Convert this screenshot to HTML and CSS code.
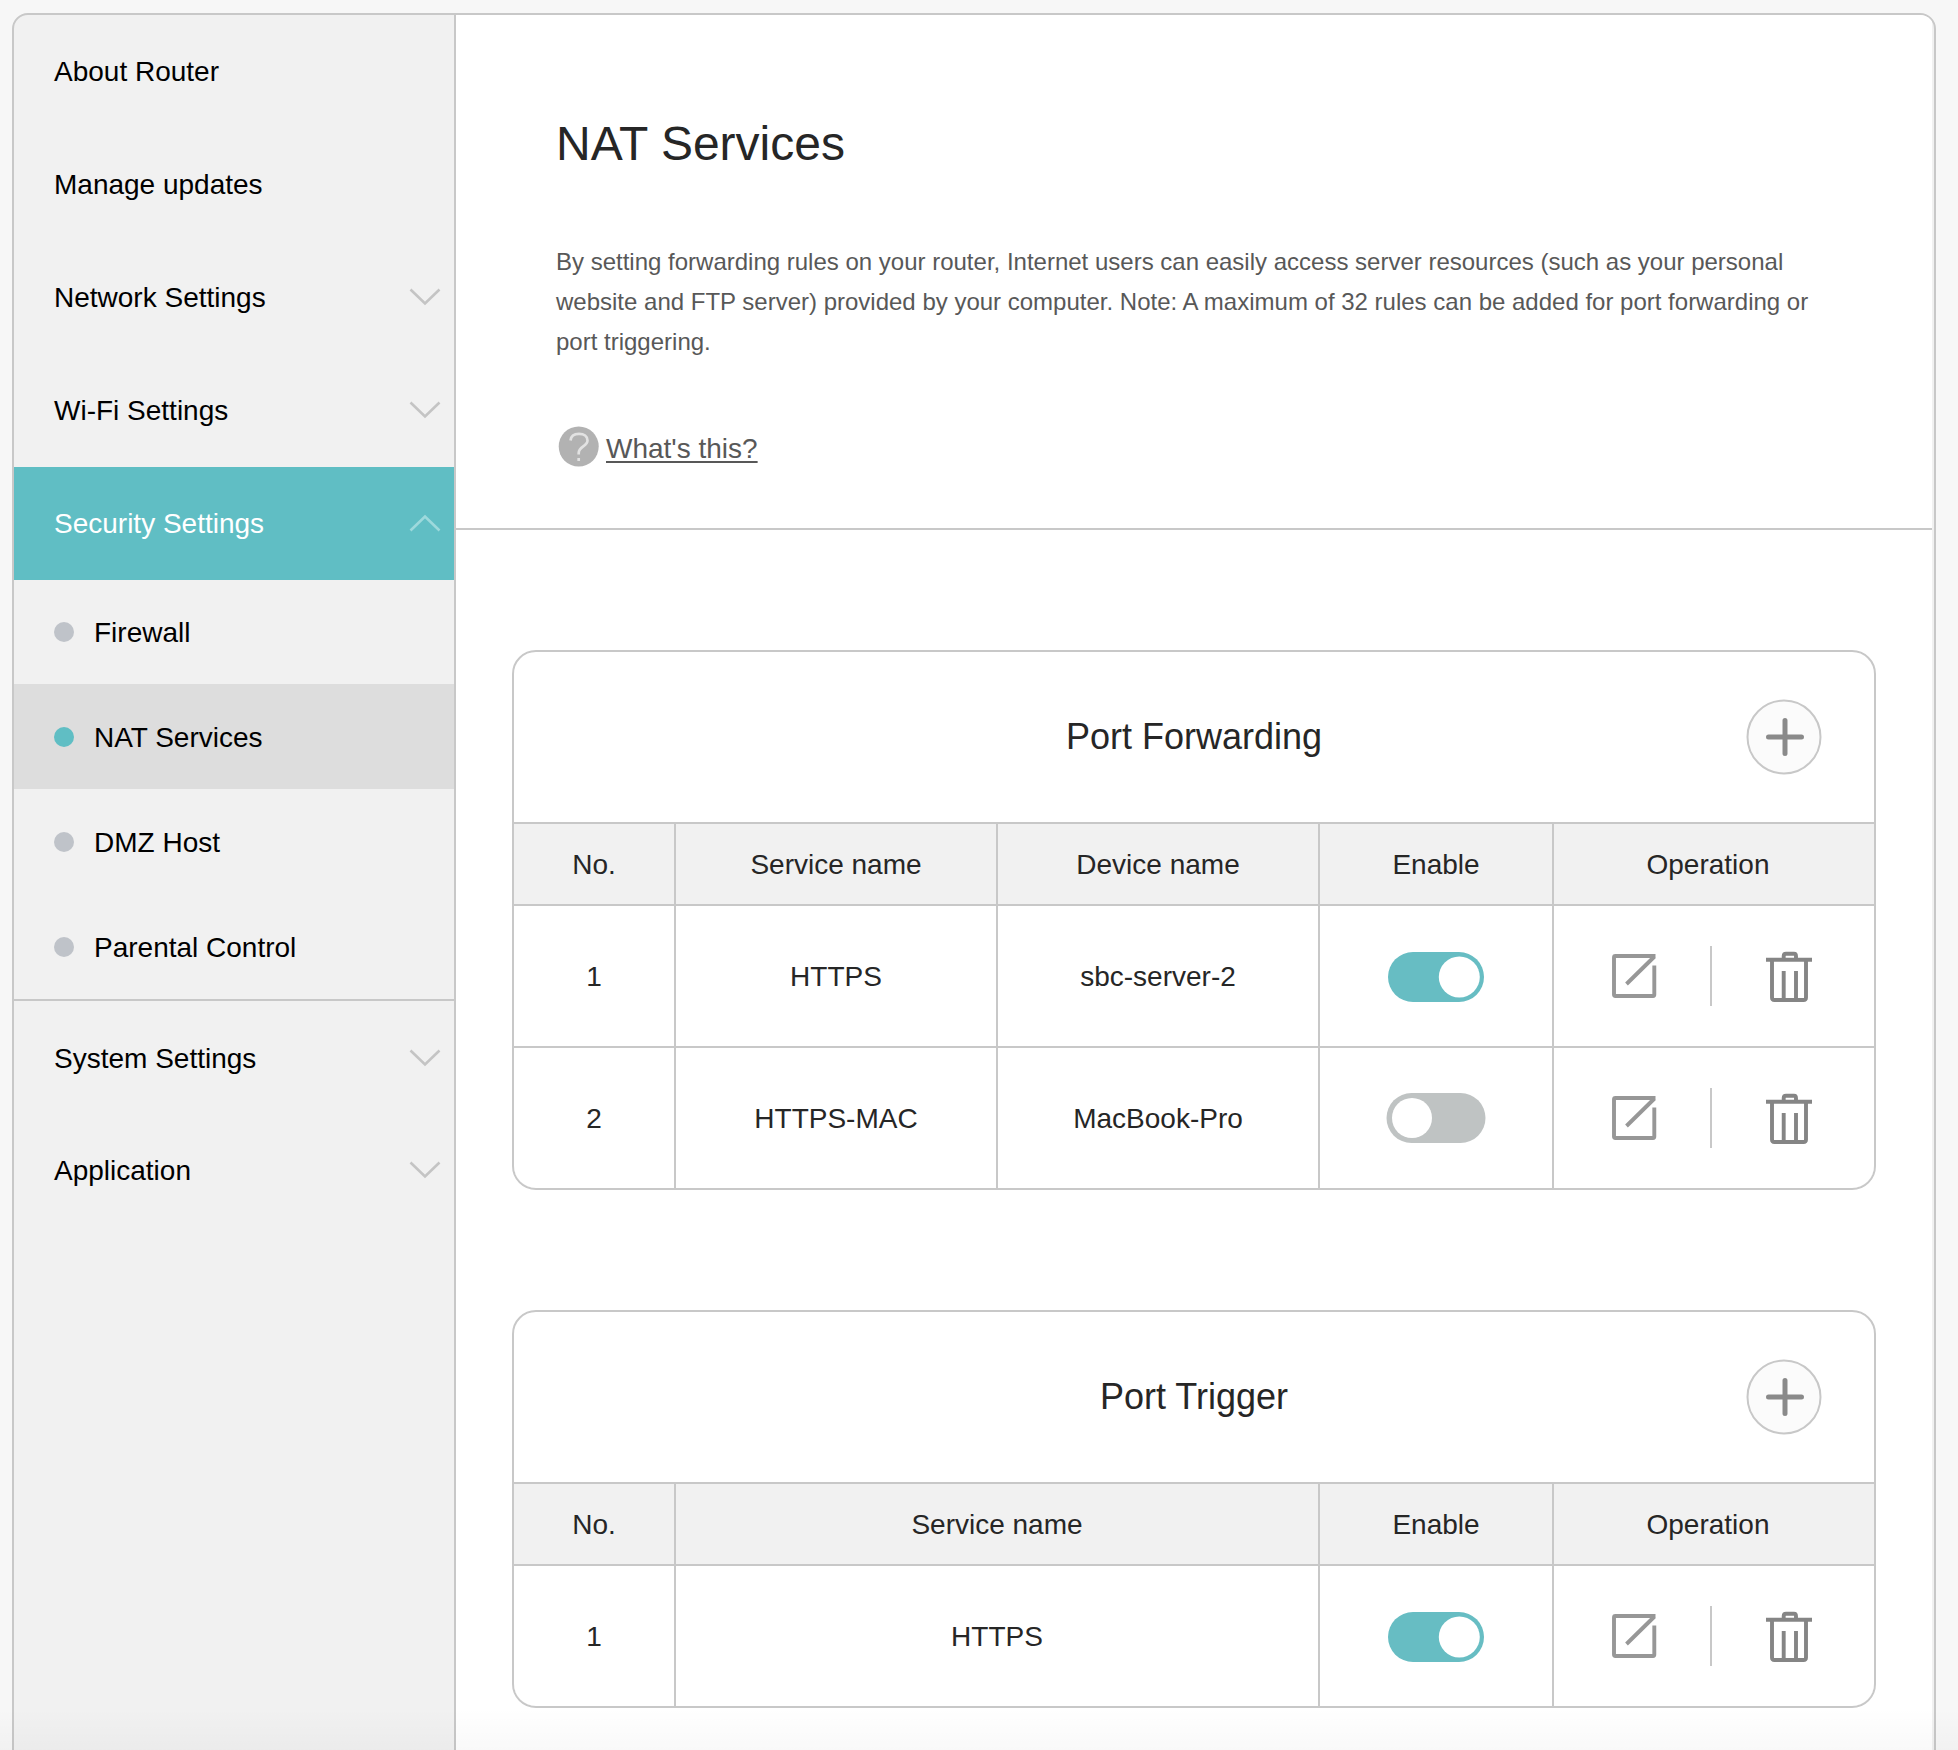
FILE: index.html
```html
<!DOCTYPE html>
<html lang="en">
<head>
<meta charset="utf-8">
<title>NAT Services</title>
<link rel="stylesheet" href="styles.css">
</head>
<body>
<svg class="defs" width="0" height="0" aria-hidden="true">
  <symbol id="chevron" viewBox="0 0 32 18"><path d="M1.5 1.5 16 15.5 30.5 1.5" fill="none" stroke="currentColor" stroke-width="2.600"/></symbol>
  <symbol id="plus" viewBox="0 0 76 76"><circle cx="38" cy="38" r="36.500" fill="#fbfbfb" stroke="#c8c8c8" stroke-width="2"/><path d="M39 21.500V54.500M22.500 38H55.500" fill="none" stroke="#8a8a8a" stroke-width="5" stroke-linecap="round"/></symbol>
  <symbol id="edit" viewBox="0 0 46 46"><path d="M44.500 2H4.500Q3 2 3 3.500V40.500Q3 42 4.500 42H42Q43.300 42 43.300 40.500V11.500M43.500 2.500 15.500 30" fill="none" stroke="#979797" stroke-width="3.900"/></symbol>
  <symbol id="trash" viewBox="0 0 46 52"><path d="M0 8.700H46M17.700 8V5Q17.700 2.700 20 2.700H28Q30 2.700 30 5V8M6 10V46.500Q6 49 8.500 49H37.500Q40 49 40 46.500V10M17.700 20V48M30 20V48" fill="none" stroke="#858585" stroke-width="3.900"/></symbol>
  <symbol id="toggle-on" viewBox="0 0 100 50"><rect x="2" y="0" width="96" height="50" rx="25" fill="#67bdc3"/><circle cx="73.300" cy="25" r="20.500" fill="#fff"/></symbol>
  <symbol id="toggle-off" viewBox="0 0 100 50"><rect x="0.500" y="0" width="99" height="50" rx="25" fill="#bfc3c3"/><circle cx="26" cy="25" r="20" fill="#fff"/></symbol>
</svg>
<div class="frame">
  <nav class="sidebar">
    <a class="item">About Router</a>
    <a class="item">Manage updates</a>
    <a class="item">Network Settings<svg class="chevron"><use href="#chevron"/></svg></a>
    <a class="item">Wi-Fi Settings<svg class="chevron"><use href="#chevron"/></svg></a>
    <a class="item open">Security Settings<svg class="chevron"><use href="#chevron"/></svg></a>
    <div class="submenu">
      <a class="subitem first"><i class="dot"></i>Firewall</a>
      <a class="subitem current"><i class="dot"></i>NAT Services</a>
      <a class="subitem"><i class="dot"></i>DMZ Host</a>
      <a class="subitem"><i class="dot"></i>Parental Control</a>
    </div>
    <a class="item compact">System Settings<svg class="chevron"><use href="#chevron"/></svg></a>
    <a class="item">Application<svg class="chevron"><use href="#chevron"/></svg></a>
  </nav>
  <main class="content">
    <header class="intro">
      <h1>NAT Services</h1>
      <p>By setting forwarding rules on your router, Internet users can easily access server resources (such as your personal website and FTP server) provided by your computer. Note: A maximum of 32 rules can be added for port forwarding or port triggering.</p>
      <div class="help">
        <svg class="help-icon" viewBox="0 0 42 42"><circle cx="20.700" cy="20.500" r="20" fill="#b2b2b2"/><path d="M12.500 14.500C13 9.500 17 7.800 21 7.800C26 7.800 29.500 10.500 29.500 14.500C29.500 20.500 20.700 20.500 20.700 27V28.500M20.700 32V35" fill="none" stroke="#e2e2e2" stroke-width="2.700"/></svg>
        <a class="help-link">What's this?</a>
      </div>
    </header>
    <section class="card">
      <div class="card-head"><h2>Port Forwarding</h2><svg class="plus"><use href="#plus"/></svg></div>
      <div class="row head"><div>No.</div><div>Service name</div><div>Device name</div><div>Enable</div><div class="ops-title">Operation</div></div>
      <div class="row"><div>1</div><div>HTTPS</div><div>sbc-server-2</div><div><svg class="toggle"><use href="#toggle-on"/></svg></div><div class="ops"><svg class="edit"><use href="#edit"/></svg><i class="sep"></i><svg class="trash"><use href="#trash"/></svg></div></div>
      <div class="row"><div>2</div><div>HTTPS-MAC</div><div>MacBook-Pro</div><div><svg class="toggle off"><use href="#toggle-off"/></svg></div><div class="ops"><svg class="edit"><use href="#edit"/></svg><i class="sep"></i><svg class="trash"><use href="#trash"/></svg></div></div>
    </section>
    <section class="card trigger">
      <div class="card-head"><h2>Port Trigger</h2><svg class="plus"><use href="#plus"/></svg></div>
      <div class="row head"><div>No.</div><div>Service name</div><div>Enable</div><div class="ops-title">Operation</div></div>
      <div class="row"><div>1</div><div>HTTPS</div><div><svg class="toggle"><use href="#toggle-on"/></svg></div><div class="ops"><svg class="edit"><use href="#edit"/></svg><i class="sep"></i><svg class="trash"><use href="#trash"/></svg></div></div>
    </section>
  </main>
</div>
<div class="fade"></div>
</body>
</html>
```
FILE: styles.css
```css
* { box-sizing: border-box; }
html, body { margin: 0; height: 1750px; overflow: hidden; }
body {
  background: #f7f7f7;
  padding: 13px 22px 0 12px;
  font: 28px/40px "Liberation Sans", Arial, sans-serif;
  color: #262626;
}
h1, h2, p { margin: 0; font-weight: 400; }
.defs { position: absolute; }
.frame {
  display: flex;
  height: 1800px;
  border: 2px solid #c8c8c8;
  border-radius: 16px;
  background: #f1f1f1;
  overflow: hidden;
}
.sidebar { width: 442px; border-right: 2px solid #c8c8c8; color: #000; }
.item {
  display: flex;
  align-items: center;
  justify-content: space-between;
  height: 113px;
  padding: 1px 13px 0 40px;
}
.compact { height: 112px; }
.chevron { width: 32px; height: 18px; margin-bottom: 2px; color: #c4c4c4; }
.open { background: #60bec4; color: #fff; }
.open .chevron { color: #9dd9dc; transform: rotate(180deg); }
.submenu { border-bottom: 2px solid #c8c8c8; margin-bottom: 1px; }
.subitem {
  display: flex;
  align-items: center;
  gap: 20px;
  height: 105px;
  padding: 2px 40px 0;
}
.first { height: 104px; }
.dot { width: 20px; height: 20px; margin-bottom: 2px; border-radius: 50%; background: #bfc3c9; }
.current { background: #ddd; }
.current .dot { background: #60bec4; }
.content { width: 1476px; background: #fff; }
.intro { height: 515px; border-bottom: 2px solid #c8c8c8; padding: 99px 100px 0; }
h1 { font-size: 48px; line-height: 60px; }
p { margin-top: 68px; font-size: 24px; color: #585858; }
.help { display: flex; align-items: center; gap: 6px; margin: 64px 0 0 2px; height: 42px; }
.help-icon { width: 42px; height: 42px; }
.help-link {
  padding-top: 4px;
  line-height: 32px;
  color: #585858;
  text-decoration: underline;
  text-decoration-thickness: 2px;
  text-underline-offset: 3px;
}
.card {
  width: 1364px;
  margin: 120px 0 0 56px;
  border: 2px solid #c8c8c8;
  border-radius: 24px;
  overflow: hidden;
}
.card-head {
  display: grid;
  grid-template-columns: 1fr auto 1fr;
  align-items: center;
  height: 170px;
  padding-right: 52px;
  padding-left: 52px;
}
h2 { grid-column: 2; font-size: 36px; }
.plus { width: 76px; height: 76px; justify-self: end; }
.row {
  display: grid;
  grid-template-columns: 160px 320px 320px 232px 320px;
  gap: 2px;
  height: 142px;
  padding-top: 2px;
  background: #c8c8c8;
}
.trigger .row { grid-template-columns: 160px 642px 232px 320px; }
.row > div {
  display: flex;
  align-items: center;
  justify-content: center;
  padding-top: 2px;
  background: #fff;
}
.head { height: 82px; }
.head > div { background: #f1f1f1; }
.row .ops-title { padding-right: 12px; }
.toggle { width: 100px; height: 50px; }
.off { margin-bottom: 2px; }
.row .ops { justify-content: flex-start; padding-left: 57px; }
.edit { width: 46px; height: 46px; }
.sep { width: 2px; height: 60px; margin: 0 54px 2px 53px; background: #c8c8c8; }
.trash { width: 46px; height: 52px; }
.fade {
  position: absolute;
  left: 0;
  right: 0;
  top: 1708px;
  height: 42px;
  background: linear-gradient(rgba(0, 0, 0, 0), rgba(0, 0, 0, .025));
}
```
